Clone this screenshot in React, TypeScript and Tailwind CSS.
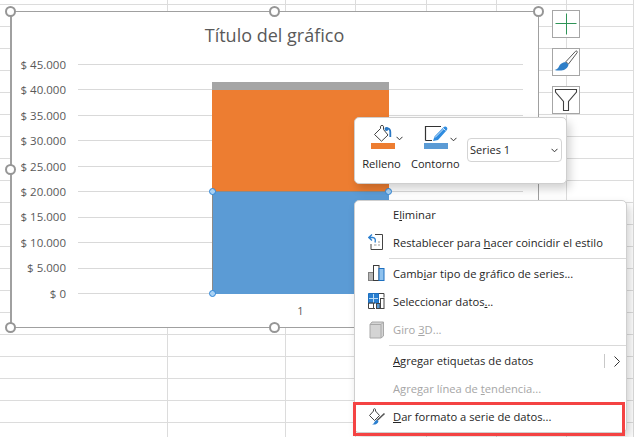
import React from 'react';

const font = { fontFamily: '"Open Sans", sans-serif' };

const columns = [168, 118, 70, 71, 70, 70, 67];
const rows = [5, ...Array(20).fill(22)];
const axisLabels = ['$ 45.000', '$ 40.000', '$ 35.000', '$ 30.000', '$ 25.000', '$ 20.000', '$ 15.000', '$ 10.000', '$ 5.000', '$ 0'];

// Sheet gridlines behind everything
const Sheet = () => (
  <div className="flex">
    {columns.map((w, c) => (
      <div key={c} className="flex flex-col border-r border-[#dcdcdc]" style={{ width: w }}>
        {rows.map((h, r) => (
          <div key={r} className="border-b border-[#dcdcdc]" style={{ height: h }} />
        ))}
      </div>
    ))}
  </div>
);

const Handle = ({ className }: { className: string }) => (
  <div className={`absolute h-[11px] w-[11px] rounded-full border-2 border-[#969696] bg-white ${className}`} />
);

const Dot = ({ className }: { className: string }) => (
  <div className={`absolute h-[7px] w-[7px] rounded-full border border-[#2f86d8] bg-[#a9d2f5] ${className}`} />
);

const Chart = () => (
  <div className="absolute left-[10px] top-[11px] flex h-[317px] w-[529px] flex-col border border-l-2 border-[#a0a0a0] bg-white">
    <div className="mt-[9px] h-[28px] pr-[1px] text-center text-[18px] leading-[28px] text-[#595959]" style={font}>
      Título del gráfico
    </div>
    <div className="relative mt-[15px] flex h-[230px] flex-col justify-between text-[11.500px] leading-none text-[#595959]" style={font}>
      {axisLabels.map((t) => (
        <div key={t} className="flex h-px items-center">
          <div className="w-[54px] whitespace-nowrap text-right">{t}</div>
          <div className="ml-[12px] h-px w-[445px] bg-[#d9d9d9]" />
        </div>
      ))}
      <div className="absolute bottom-0 left-[66px] top-0 flex w-[445px] justify-center">
        <div className="relative mt-[18px] flex w-[177px] flex-col">
          <div className="h-[8px] bg-[#a5a5a5]" />
          <div className="h-[101px] bg-[#ed7d31]" />
          <div className="flex-1 border-l border-t border-[#8a8a8a] bg-[#5b9bd5]" />
          <Dot className="left-[-3px] top-[106px]" />
          <Dot className="right-[-3px] top-[106px]" />
          <Dot className="bottom-[-3px] left-[-3px]" />
        </div>
      </div>
    </div>
    <div className="ml-[66px] mt-[9px] w-[445px] text-center text-[11px] leading-[16px] text-[#595959]" style={font}>
      1
    </div>
    <Handle className="left-[-7px] top-[-6px]" />
    <Handle className="left-[257px] top-[-6px]" />
    <Handle className="right-[-6px] top-[-6px]" />
    <Handle className="left-[-7px] top-[152px]" />
    <Handle className="bottom-[-6px] left-[-7px]" />
    <Handle className="bottom-[-6px] left-[257px]" />
    <Handle className="bottom-[-6px] right-[-6px]" />
  </div>
);

const SideButton = ({ children }: { children: React.ReactNode }) => (
  <div className="flex h-[28px] w-[28px] items-center justify-center border border-[#a6a6a6] bg-white">{children}</div>
);

const SideButtons = () => (
  <div className="absolute left-[552px] top-[10px] flex flex-col gap-[10px]">
    <SideButton>
      <svg width="22" height="22" viewBox="0 0 22 22">
        <path d="M11.500 0.500V21.500M0.500 10.500H21.500" stroke="#2f9457" strokeWidth="1" />
      </svg>
    </SideButton>
    <SideButton>
      <svg width="26" height="26" viewBox="0 0 26 26">
        <path d="M22.500 2.300c1.200-.9 2.300 .2 1.600 1.400L15.500 15l-2.700-2.200z" fill="#fff" stroke="#5a5a5a" strokeWidth="1" />
        <path d="M12.500 13l3 2.500c-.5 3.300-3.300 5.700-7.200 6-2.500.2-4.800.1-6.800-.5 2.400-.5 3.400-1.600 4.300-3.300 1.200-2.700 3.700-4.500 6.700-4.700z" fill="#2f7fc8" />
      </svg>
    </SideButton>
    <SideButton>
      <svg width="26" height="26" viewBox="0 0 26 26">
        <path d="M2.500 2.500H23.500V5L15.500 14.500V23.500H10.500V14.500L2.500 5z" fill="#fff" stroke="#404040" strokeWidth="1.100" />
      </svg>
    </SideButton>
  </div>
);

const Caret = ({ className = '' }: { className?: string }) => (
  <svg width="7" height="5" viewBox="0 0 7 5" className={className}>
    <path d="M0.500 0.800L3.500 3.800L6.500 0.800" fill="none" stroke="#333" strokeWidth="1" />
  </svg>
);

const MiniToolbar = () => (
  <div className="absolute left-[354px] top-[117px] flex h-[67px] w-[213px] rounded-[5px] border border-[#cfcfcf] bg-white shadow-[3px_5px_10px_rgba(0,0,0,0.18)]" style={font}>
    <div className="ml-[8px] mt-[7px] flex w-[40px] flex-col items-center">
      <div className="relative h-[18px] w-[24px]">
        <svg width="24" height="18" viewBox="0 0 24 18" className="absolute left-0 top-0">
          <path d="M3.500 9.500L9.500 3.500V1.300c0-1.100 3-1.100 3 0V4.500L17 10l-6.500 6.200z" fill="#fff" stroke="#444" strokeWidth="1" />
          <path d="M15.500 3.500c2.500-.5 3.800 1 3.800 3.500v5" fill="none" stroke="#2a78c4" strokeWidth="1.800" />
          <circle cx="15.500" cy="4" r="2" fill="#2a78c4" />
        </svg>
        <Caret className="absolute left-[25px] top-[11px]" />
      </div>
      <div className="h-[6px] w-[24px] bg-[#ed7d31]" />
      <div className="mr-[3px] mt-[8px] whitespace-nowrap text-[11.200px] leading-[14px] text-[#262626]">Relleno</div>
    </div>
    <div className="ml-[8px] mt-[7px] flex w-[48px] flex-col items-start">
      <div className="relative ml-[13px] h-[18px] w-[32px]">
        <svg width="32" height="18" viewBox="0 0 32 18" className="absolute left-0 top-0">
          <path d="M1.500 15.500V1.500H17M1.500 15.500H8" fill="none" stroke="#333" strokeWidth="1.200" />
          <path d="M9 16l1.500-4.500 9-9.300c1-1 2.500-1 3.300 0 .8 1 .7 2.100-.1 3L14 15z" fill="#2f8ce0" />
          <path d="M11 12.500l8.500-8.500M19 3l2.500 2.500" stroke="#fff" strokeWidth="0.800" fill="none" />
        </svg>
      </div>
      <div className="ml-[13px] h-[6px] w-[24px] bg-[#5b9bd5]" />
      <div className="mt-[8px] whitespace-nowrap text-[11px] leading-[14px] text-[#262626]">Contorno</div>
      <Caret className="absolute left-[95px] top-[19px]" />
    </div>
    <div className="ml-[8px] mt-[20px] flex h-[24px] w-[95px] items-center justify-between rounded-[4px] border border-[#d4d4d4] px-[2px] text-[11px] text-[#262626]">
      <span>Series 1</span>
      <Caret className="mr-[1px]" />
    </div>
  </div>
);

const icons: Record<string, React.ReactNode> = {
  reset: (
    <svg width="18" height="18" viewBox="0 0 18 18">
      <path d="M7 0.500H14.500V15.500H3V10" fill="#fff" stroke="#444" strokeWidth="1" />
      <path d="M4 0.500L0.800 3.500L4 6.500M1.200 3.500H4.500c2.500 0 3.300 2 2.500 5" fill="none" stroke="#2a7fd0" strokeWidth="1.300" />
      <path d="M6 11h2.500M10 11h2M10 8h2" stroke="#999" strokeWidth="1" />
    </svg>
  ),
  bars: (
    <svg width="18" height="18" viewBox="0 0 18 18">
      <rect x="0.500" y="7.500" width="5" height="8" fill="#b4b4b4" stroke="#808080" />
      <rect x="5.500" y="0.500" width="5.500" height="15" fill="#fff" stroke="#3c3c3c" />
      <rect x="11" y="3.500" width="5" height="12" fill="#8fc2ee" stroke="#1c6fc0" />
    </svg>
  ),
  data: (
    <svg width="18" height="18" viewBox="0 0 18 18">
      <path d="M10 0.500H16V4.500" fill="none" stroke="#444" />
      <path d="M0.500 0.500H10.500V10H0.500z" fill="#2a7fd0" stroke="#1c6fc0" />
      <path d="M5.500 1V10M1 5.500H10" stroke="#bcdcf5" strokeWidth="1" />
      <path d="M0.500 10V15.500H7M0.500 10H7M5.500 10V15" fill="none" stroke="#444" />
      <rect x="8.500" y="10.500" width="3.500" height="5" fill="#5b9bd5" stroke="#444" />
      <rect x="12.500" y="5.500" width="3.500" height="10" fill="#fff" stroke="#444" />
    </svg>
  ),
  rotate: (
    <svg width="16" height="18" viewBox="0 0 16 18">
      <path d="M1 3.500L3 1H14.500V15L12 17H1z" fill="#d4d4d4" stroke="#a8a8a8" />
      <path d="M1 3.500H12V17M12 3.500L14.500 1" fill="none" stroke="#a8a8a8" />
    </svg>
  ),
  format: (
    <svg width="18" height="18" viewBox="0 0 18 18">
      <path d="M1.500 7.500L5.500 3V1.500c0-1 2-1 2 0V3L11.500 7.500L6.500 12.500z" fill="#fff" stroke="#444" strokeWidth="1" />
      <path d="M16.500 5.500L9 12.500" stroke="#555" strokeWidth="1.600" />
      <path d="M8.500 11.500L10.500 13.500c-.8 2.300-3 3.500-6.500 3 1.500-.5 2-1.500 2.500-2.500.5-.9 1-1.500 2-2z" fill="#2a7fd0" />
    </svg>
  ),
};

const MenuItem = ({ icon, disabled, arrow, children }: { icon?: string; disabled?: boolean; arrow?: boolean; children: React.ReactNode }) => (
  <div className={`flex h-[28px] items-center ${disabled ? 'text-[#a6a6a6]' : 'text-[#262626]'}`}>
    <div className="flex w-[38px] justify-center pl-[5px]">{icon ? icons[icon] : null}</div>
    <div className="flex-1 whitespace-nowrap">{children}</div>
    {arrow && (
      <div className="mr-[6px] flex h-[14px] items-center border-l border-[#c8c8c8] pl-[9px]">
        <svg width="6" height="11" viewBox="0 0 6 11">
          <path d="M0.500 0.500L5.500 5.500L0.500 10.500" fill="none" stroke="#333" strokeWidth="1" />
        </svg>
      </div>
    )}
  </div>
);

const Sep = () => <div className="my-[1px] ml-[34px] h-px bg-[#d9d9d9]" />;

const ContextMenu = () => (
  <div className="absolute left-[354px] top-[200px] h-[233px] w-[273px] rounded-[5px] border border-[#cfcfcf] bg-white text-[11.200px] shadow-[3px_5px_10px_rgba(0,0,0,0.18)]" style={font}>
    <MenuItem>E<u>l</u>iminar</MenuItem>
    <MenuItem icon="reset">Restablecer para <u>h</u>acer coincidir el estilo</MenuItem>
    <Sep />
    <MenuItem icon="bars">Camb<u>i</u>ar tipo de gráfico de series...</MenuItem>
    <MenuItem icon="data">Seleccionar datos<u>.</u>..</MenuItem>
    <MenuItem icon="rotate" disabled>Giro <u>3</u>D...</MenuItem>
    <Sep />
    <MenuItem arrow><u>A</u>gregar etiquetas de datos</MenuItem>
    <MenuItem disabled>Agregar línea de <u>t</u>endencia...</MenuItem>
    <MenuItem icon="format"><u>D</u>ar formato a serie de datos...</MenuItem>
  </div>
);

export default function App() {
  return (
    <div className="relative h-[437px] w-[634px] overflow-hidden bg-white">
      <Sheet />
      <Chart />
      <SideButtons />
      <MiniToolbar />
      <ContextMenu />
      {/* Red callout around the last menu entry */}
      <div className="absolute left-[353px] top-[402px] h-[34px] w-[272px] border-[3px] border-[#f44343]" />
    </div>
  );
}
